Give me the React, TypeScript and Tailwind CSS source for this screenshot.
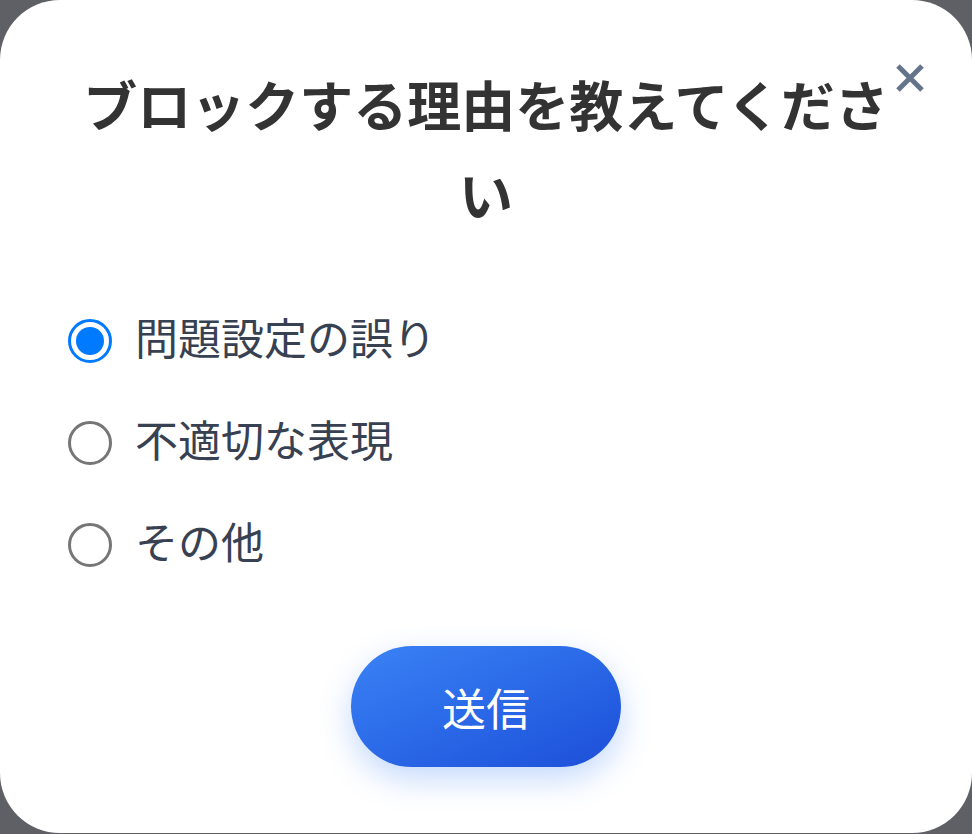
import React, { useState } from "react";

const reasons = ["問題設定の誤り", "不適切な表現", "その他"];

function Radio({ checked }: { checked: boolean }) {
  if (checked) {
    return (
      <span className="flex h-[44px] w-[44px] shrink-0 items-center justify-center rounded-full border-[3px] border-[#007aff]">
        <span className="h-[28px] w-[28px] rounded-full bg-[#007aff]" />
      </span>
    );
  }
  return (
    <span className="h-[44px] w-[44px] shrink-0 rounded-full border-[3px] border-[#767676]" />
  );
}

export default function App() {
  const [selected, setSelected] = useState(0);

  return (
    <div
      className="h-screen w-full bg-[#5f6065]"
      style={{ fontFamily: '"Noto Sans CJK JP", "Noto Sans", sans-serif' }}
    >
      <div className="relative flex h-[833px] w-full flex-col items-center rounded-[60px] bg-white pt-[59px]">
        <button
          aria-label="閉じる"
          className="absolute right-[47px] top-[63px] text-[#64748b]"
        >
          <svg width="30" height="30" viewBox="0 0 30 30" fill="none">
            <path
              d="M3 3 L27 27 M27 3 L3 27"
              stroke="currentColor"
              strokeWidth="5"
              strokeLinecap="butt"
            />
          </svg>
        </button>

        <h2 className="w-[830px] text-center text-[54px] font-bold leading-[90px] text-[#333333]">
          ブロックする理由を教えてください
        </h2>

        <div className="mt-[72px] flex w-full flex-col gap-[42px] pl-[68px]">
          {reasons.map((reason, index) => (
            <label
              key={reason}
              onClick={() => setSelected(index)}
              className="flex h-[60px] cursor-pointer items-center gap-[23px]"
            >
              <Radio checked={selected === index} />
              <span className="mb-[10px] text-[43px] leading-none text-[#374151]">
                {reason}
              </span>
            </label>
          ))}
        </div>

        <button className="mt-[71px] flex h-[121px] w-[270px] items-center justify-center rounded-full bg-linear-to-br from-[#3b82f6] to-[#1d4ed8] text-[44px] font-normal text-white shadow-[0_12px_32px_rgba(59,130,246,0.3)]">
          送信
        </button>
      </div>
    </div>
  );
}
